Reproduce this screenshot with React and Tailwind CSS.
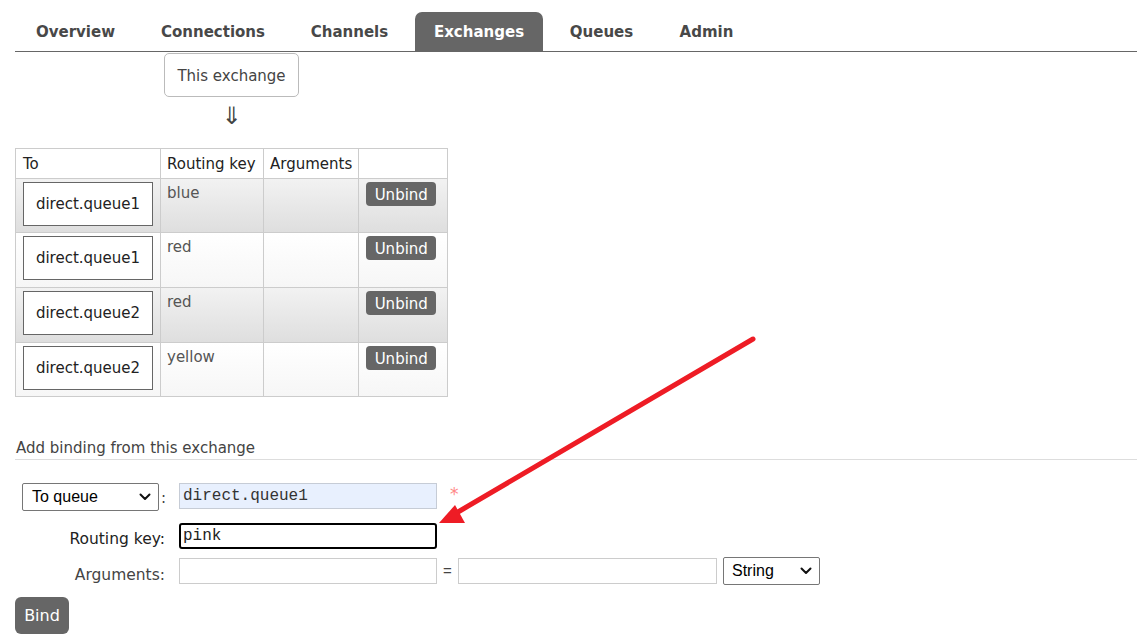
import React from "react";

const tabs = [
  ["Overview", 119, false],
  ["Connections", 142, false],
  ["Channels", 117, false],
  ["Exchanges", 128, true],
  ["Queues", 103, false],
  ["Admin", 93, false],
];

const rows = [
  ["direct.queue1", "blue", true, 54],
  ["direct.queue1", "red", false, 55],
  ["direct.queue2", "red", true, 55],
  ["direct.queue2", "yellow", false, 54],
];

function Chevron() {
  return (
    <svg width="12" height="8" viewBox="0 0 12 8" className="shrink-0">
      <path d="M1.5 1.5 L6 6 L10.5 1.5" fill="none" stroke="#111" strokeWidth="2" strokeLinecap="round" strokeLinejoin="round" />
    </svg>
  );
}

export default function App() {
  return (
    <div className="relative w-[1137px] h-[634px] overflow-hidden bg-white font-['DejaVu_Sans',sans-serif] text-[#444]">
      {/* nav */}
      <div className="ml-[15px] pt-[12px] pl-[1px] flex gap-[7px] border-b border-[#666]">
        {tabs.map(([t, w, active]) => (
          <div
            key={t}
            style={{ width: w }}
            className={
              "h-[39px] pt-[2px] flex items-center justify-center text-[15px] font-bold rounded-t-[7px] " +
              (active ? "bg-[#666] text-white" : "text-[#484848]")
            }
          >
            {t}
          </div>
        ))}
      </div>

      {/* this exchange */}
      <div className="ml-[164px] mt-[1px] w-[135px] h-[44px] pt-[2px] border border-[#bbb] rounded-[5px] flex items-center justify-center text-[15px] text-[#444]">
        This exchange
      </div>
      <div className="ml-[164px] w-[135px] h-[36px] pt-[1px] flex items-center justify-center text-[24px] leading-none text-[#444]">
        ⇓
      </div>

      {/* table */}
      <table className="ml-[15px] mt-[15px] border-collapse text-[15px]">
        <thead>
          <tr className="h-[30px] text-[#222]">
            <th className="w-[145px] border border-[#ccc] text-left font-normal px-[7px] pt-[2px] align-middle">To</th>
            <th className="w-[103px] border border-[#ccc] text-left font-normal px-[6px] pt-[2px] align-middle">Routing key</th>
            <th className="w-[95px] border border-[#ccc] text-left font-normal px-[6px] pt-[2px] align-middle">Arguments</th>
            <th className="w-[89px] border border-[#ccc]"></th>
          </tr>
        </thead>
        <tbody>
          {rows.map(([q, k, alt, h], i) => (
            <tr
              key={i}
              style={{ height: h }}
              className={
                alt
                  ? "bg-linear-to-b from-[#f2f2f2] to-[#dedede]"
                  : "bg-linear-to-b from-[#ffffff] to-[#f6f6f6]"
              }
            >
              <td className="border border-[#ccc] align-top pt-[3px] px-[7px]">
                <div className="w-[130px] h-[44px] pt-[1px] border border-[#666] bg-white flex items-center justify-center text-[#222]">
                  {q}
                </div>
              </td>
              <td className="border border-[#ccc] align-top pt-[3px] px-[6px] text-[#555]">{k}</td>
              <td className="border border-[#ccc]"></td>
              <td className="border border-[#ccc] align-top pt-[3px] px-[7px]">
                <div className="w-[70px] h-[24px] pt-[2px] rounded-[4px] bg-[#666] text-white flex items-center justify-center">
                  Unbind
                </div>
              </td>
            </tr>
          ))}
        </tbody>
      </table>

      {/* add binding */}
      <div className="ml-[15px] mt-[40px] pl-[1px] pt-[2px] pb-[2px] border-b border-[#ddd] text-[15px] leading-[18px] text-[#444]">
        Add binding from this exchange
      </div>

      <div className="ml-[15px] mt-[23px] grid grid-cols-[150px_auto] gap-x-[14px] items-center">
        {/* row 1 */}
        <div className="flex items-center justify-end h-[28px]">
          <div className="w-[137px] h-[28px] border border-[#767676] rounded-[2px] flex items-center justify-between pl-[9px] pr-[7px] font-['Liberation_Sans',sans-serif] text-[16px] text-black">
            <span>To queue</span>
            <Chevron />
          </div>
          <span className="ml-[2px] w-[4px] pt-[3px] text-[15px] text-[#444]">:</span>
        </div>
        <div className="flex items-start h-[28px]">
          <div className="w-[258px] h-[26px] bg-[#e8f0fe] border border-[#c6ccd6] flex items-center px-[3px] font-['Liberation_Mono',monospace] text-[16px] text-[#333]">
            direct.queue1
          </div>
          <span className="ml-[13px] mt-[3px] text-[#f88] text-[17px] leading-none">*</span>
        </div>

        {/* row 2 */}
        <div className="mt-[11px] pt-[7px] text-right text-[15.5px] leading-[20px] text-[#222]">Routing key:</div>
        <div className="mt-[11px] flex items-center">
          <div className="w-[258px] h-[26px] border-2 border-black rounded-[3px] flex items-center px-[2px] font-['Liberation_Mono',monospace] text-[16px] text-[#222]">
            pink
          </div>
        </div>

        {/* row 3 */}
        <div className="mt-[8px] pt-[8px] text-right text-[15.5px] leading-[20px] text-[#444]">Arguments:</div>
        <div className="mt-[8px] flex items-center h-[28px]">
          <div className="w-[258px] h-[26px] border border-[#ccc]"></div>
          <span className="w-[21px] text-center font-['Liberation_Sans',sans-serif] text-[15px] text-[#444]">=</span>
          <div className="w-[259px] h-[26px] border border-[#ccc]"></div>
          <div className="ml-[6px] w-[97px] h-[28px] border border-[#767676] rounded-[2px] flex items-center justify-between pl-[8px] pr-[7px] font-['Liberation_Sans',sans-serif] text-[16px] text-black">
            <span>String</span>
            <Chevron />
          </div>
        </div>
      </div>

      <div className="ml-[15px] mt-[12px] w-[54px] h-[37px] rounded-[6px] bg-[#666] text-white flex items-center justify-center text-[16px]">
        Bind
      </div>

      {/* red annotation arrow */}
      <svg className="absolute left-0 top-0 pointer-events-none" width="1137" height="634">
        <line x1="753" y1="339" x2="458" y2="512" stroke="#ee1c25" strokeWidth="5" strokeLinecap="round" />
        <polygon points="439,523 455,505 465,523" fill="#ee1c25" />
      </svg>
    </div>
  );
}
